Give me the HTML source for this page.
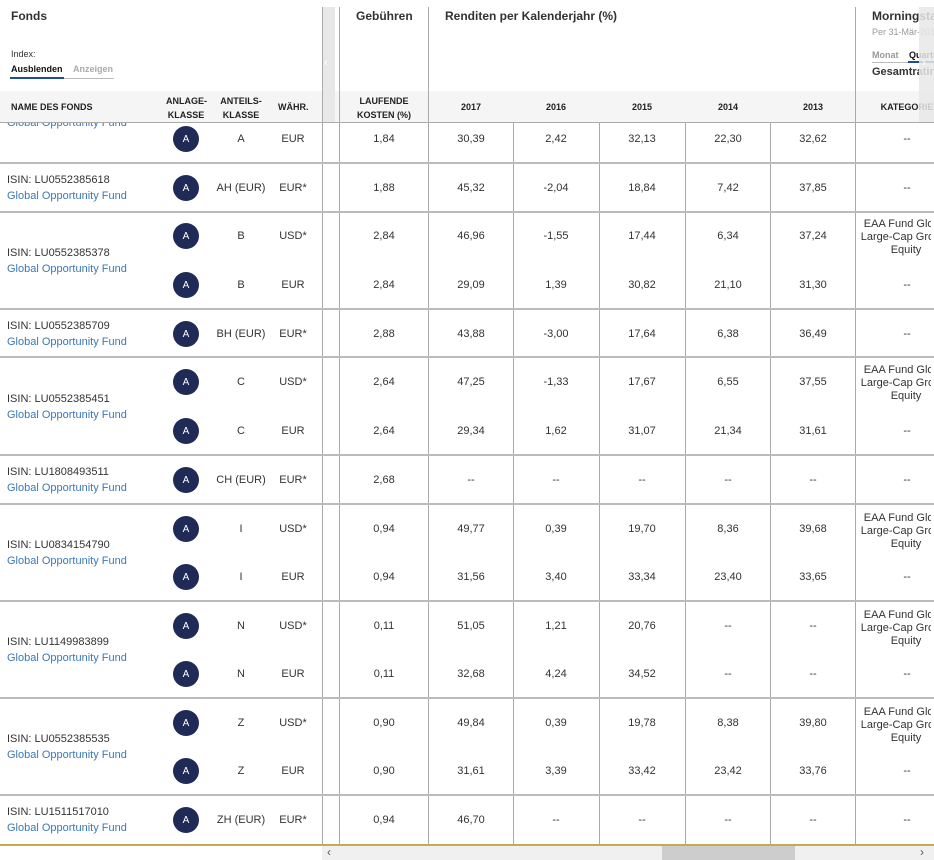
<!DOCTYPE html>
<html><head><meta charset="utf-8"><style>
*{margin:0;padding:0;box-sizing:border-box}
body{width:934px;height:860px;overflow:hidden;background:#fff;font-family:"Liberation Sans",sans-serif;color:#333;font-size:11px;position:relative}
.a{position:absolute}
.c{position:absolute;transform:translateX(-50%);white-space:nowrap;line-height:14px;top:-7px}
.r{position:absolute;left:0;width:934px;height:0}
.b{position:absolute;left:173px;top:-13px;width:26px;height:26px;border-radius:50%;background:#1f2a56;color:#fff;font-size:10px;text-align:center;line-height:12px;padding-top:8px}
.v{position:absolute;width:1px;background:#aaa}
.h{position:absolute;left:0;width:934px;height:2px;background:#bbb}
.hd{font-weight:bold;font-size:9px;color:#222;text-align:center;line-height:14px}
.nm{position:absolute;left:7px;line-height:16px;font-size:11px}
.lk{color:#3a78b8}
.k{position:absolute;left:-2px;width:104px;text-align:center;line-height:13px}
</style></head><body>
<div class="a" style="left:0;top:91px;width:934px;height:31px;background:#f5f5f5"></div>
<div class="a" style="left:11px;top:9px;font-weight:bold;font-size:12px;color:#333">Fonds</div>
<div class="a" style="left:11px;top:49px;font-size:9px;color:#333">Index:</div>
<div class="a" style="left:11px;top:64px;font-size:9px;font-weight:bold;color:#111">Ausblenden</div>
<div class="a" style="left:73px;top:64px;font-size:9px;font-weight:bold;color:#aaa">Anzeigen</div>
<div class="a" style="left:10px;top:77px;width:54px;height:2px;background:#1d4f8a"></div>
<div class="a" style="left:64px;top:78px;width:50px;height:1px;background:#bbb"></div>
<div class="a" style="left:356px;top:9px;font-weight:bold;font-size:12px;color:#333">Gebühren</div>
<div class="a" style="left:445px;top:9px;font-weight:bold;font-size:12px;color:#333">Renditen per Kalenderjahr (%)</div>
<div class="a" style="left:872px;top:9px;font-weight:bold;font-size:12px;color:#333;white-space:nowrap">Morningstar</div>
<div class="a" style="left:872px;top:27px;font-size:9px;color:#999;white-space:nowrap">Per 31-Mär-2018</div>
<div class="a" style="left:872px;top:50px;font-size:9px;font-weight:bold;color:#999">Monat</div>
<div class="a" style="left:909px;top:50px;font-size:9px;font-weight:bold;color:#111">Quartal</div>
<div class="a" style="left:872px;top:62px;width:62px;height:1px;background:#bbb"></div>
<div class="a" style="left:908px;top:61px;width:26px;height:2px;background:#1d4f8a"></div>
<div class="a" style="left:872px;top:66px;font-size:11px;font-weight:bold;color:#333;white-space:nowrap">Gesamtrating</div>

<div class="a hd" style="left:11px;top:100px">NAME DES FONDS</div>
<div class="a hd" style="left:166px;top:94px;width:40px">ANLAGE-<br>KLASSE</div>
<div class="a hd" style="left:216px;top:94px;width:50px">ANTEILS-<br>KLASSE</div>
<div class="a hd" style="left:278px;top:100px;width:30px">WÄHR.</div>
<div class="a hd" style="left:345px;top:94px;width:78px">LAUFENDE<br>KOSTEN (%)</div>
<div class="a hd" style="left:428px;top:100px;width:86px">2017</div>
<div class="a hd" style="left:513px;top:100px;width:86px">2016</div>
<div class="a hd" style="left:599px;top:100px;width:86px">2015</div>
<div class="a hd" style="left:685px;top:100px;width:86px">2014</div>
<div class="a hd" style="left:770px;top:100px;width:86px">2013</div>
<div class="a hd" style="left:860px;top:100px;width:94px">KATEGORIE</div>

<div class="v" style="left:322px;top:7px;height:838px"></div>
<div class="v" style="left:339px;top:7px;height:838px"></div>
<div class="v" style="left:428px;top:7px;height:115px"></div>
<div class="v" style="left:855px;top:7px;height:838px"></div>
<div class="v" style="left:428px;top:122px;height:723px"></div>
<div class="v" style="left:513px;top:122px;height:723px"></div>
<div class="v" style="left:599px;top:122px;height:723px"></div>
<div class="v" style="left:685px;top:122px;height:723px"></div>
<div class="v" style="left:770px;top:122px;height:723px"></div>

<div class="h" style="top:122px;height:1px;background:#aaa"></div>
<div class="h" style="top:162px"></div>
<div class="h" style="top:211px"></div>
<div class="h" style="top:308px"></div>
<div class="h" style="top:356px"></div>
<div class="h" style="top:454px"></div>
<div class="h" style="top:503px"></div>
<div class="h" style="top:600px"></div>
<div class="h" style="top:697px"></div>
<div class="h" style="top:794px"></div>
<div class="h" style="top:844px;background:#c8a850"></div>

<div class="a" style="left:0;top:123px;width:322px;height:39px;overflow:hidden"><div class="nm lk" style="top:-8px">Global Opportunity Fund</div></div>
<div class="nm" style="top:172px">ISIN: LU0552385618</div><div class="nm lk" style="top:188px">Global Opportunity Fund</div>
<div class="nm" style="top:245px">ISIN: LU0552385378</div><div class="nm lk" style="top:261px">Global Opportunity Fund</div>
<div class="nm" style="top:318px">ISIN: LU0552385709</div><div class="nm lk" style="top:334px">Global Opportunity Fund</div>
<div class="nm" style="top:391px">ISIN: LU0552385451</div><div class="nm lk" style="top:407px">Global Opportunity Fund</div>
<div class="nm" style="top:464px">ISIN: LU1808493511</div><div class="nm lk" style="top:480px">Global Opportunity Fund</div>
<div class="nm" style="top:537px">ISIN: LU0834154790</div><div class="nm lk" style="top:553px">Global Opportunity Fund</div>
<div class="nm" style="top:634px">ISIN: LU1149983899</div><div class="nm lk" style="top:650px">Global Opportunity Fund</div>
<div class="nm" style="top:731px">ISIN: LU0552385535</div><div class="nm lk" style="top:747px">Global Opportunity Fund</div>
<div class="nm" style="top:804px">ISIN: LU1511517010</div><div class="nm lk" style="top:820px">Global Opportunity Fund</div>

<div class="r" style="top:139px"><div class="b">A</div><div class="c" style="left:241px">A</div><div class="c" style="left:293px">EUR</div><div class="c" style="left:384px">1,84</div><div class="c" style="left:471px">30,39</div><div class="c" style="left:556px">2,42</div><div class="c" style="left:642px">32,13</div><div class="c" style="left:728px">22,30</div><div class="c" style="left:813px">32,62</div><div class="c" style="left:907px">--</div></div>
<div class="r" style="top:188px"><div class="b">A</div><div class="c" style="left:241px">AH (EUR)</div><div class="c" style="left:293px">EUR*</div><div class="c" style="left:384px">1,88</div><div class="c" style="left:471px">45,32</div><div class="c" style="left:556px">-2,04</div><div class="c" style="left:642px">18,84</div><div class="c" style="left:728px">7,42</div><div class="c" style="left:813px">37,85</div><div class="c" style="left:907px">--</div></div>
<div class="r" style="top:236px"><div class="b">A</div><div class="c" style="left:241px">B</div><div class="c" style="left:293px">USD*</div><div class="c" style="left:384px">2,84</div><div class="c" style="left:471px">46,96</div><div class="c" style="left:556px">-1,55</div><div class="c" style="left:642px">17,44</div><div class="c" style="left:728px">6,34</div><div class="c" style="left:813px">37,24</div></div>
<div class="r" style="top:285px"><div class="b">A</div><div class="c" style="left:241px">B</div><div class="c" style="left:293px">EUR</div><div class="c" style="left:384px">2,84</div><div class="c" style="left:471px">29,09</div><div class="c" style="left:556px">1,39</div><div class="c" style="left:642px">30,82</div><div class="c" style="left:728px">21,10</div><div class="c" style="left:813px">31,30</div><div class="c" style="left:907px">--</div></div>
<div class="r" style="top:334px"><div class="b">A</div><div class="c" style="left:241px">BH (EUR)</div><div class="c" style="left:293px">EUR*</div><div class="c" style="left:384px">2,88</div><div class="c" style="left:471px">43,88</div><div class="c" style="left:556px">-3,00</div><div class="c" style="left:642px">17,64</div><div class="c" style="left:728px">6,38</div><div class="c" style="left:813px">36,49</div><div class="c" style="left:907px">--</div></div>
<div class="r" style="top:382px"><div class="b">A</div><div class="c" style="left:241px">C</div><div class="c" style="left:293px">USD*</div><div class="c" style="left:384px">2,64</div><div class="c" style="left:471px">47,25</div><div class="c" style="left:556px">-1,33</div><div class="c" style="left:642px">17,67</div><div class="c" style="left:728px">6,55</div><div class="c" style="left:813px">37,55</div></div>
<div class="r" style="top:431px"><div class="b">A</div><div class="c" style="left:241px">C</div><div class="c" style="left:293px">EUR</div><div class="c" style="left:384px">2,64</div><div class="c" style="left:471px">29,34</div><div class="c" style="left:556px">1,62</div><div class="c" style="left:642px">31,07</div><div class="c" style="left:728px">21,34</div><div class="c" style="left:813px">31,61</div><div class="c" style="left:907px">--</div></div>
<div class="r" style="top:480px"><div class="b">A</div><div class="c" style="left:241px">CH (EUR)</div><div class="c" style="left:293px">EUR*</div><div class="c" style="left:384px">2,68</div><div class="c" style="left:471px">--</div><div class="c" style="left:556px">--</div><div class="c" style="left:642px">--</div><div class="c" style="left:728px">--</div><div class="c" style="left:813px">--</div><div class="c" style="left:907px">--</div></div>
<div class="r" style="top:529px"><div class="b">A</div><div class="c" style="left:241px">I</div><div class="c" style="left:293px">USD*</div><div class="c" style="left:384px">0,94</div><div class="c" style="left:471px">49,77</div><div class="c" style="left:556px">0,39</div><div class="c" style="left:642px">19,70</div><div class="c" style="left:728px">8,36</div><div class="c" style="left:813px">39,68</div></div>
<div class="r" style="top:577px"><div class="b">A</div><div class="c" style="left:241px">I</div><div class="c" style="left:293px">EUR</div><div class="c" style="left:384px">0,94</div><div class="c" style="left:471px">31,56</div><div class="c" style="left:556px">3,40</div><div class="c" style="left:642px">33,34</div><div class="c" style="left:728px">23,40</div><div class="c" style="left:813px">33,65</div><div class="c" style="left:907px">--</div></div>
<div class="r" style="top:626px"><div class="b">A</div><div class="c" style="left:241px">N</div><div class="c" style="left:293px">USD*</div><div class="c" style="left:384px">0,11</div><div class="c" style="left:471px">51,05</div><div class="c" style="left:556px">1,21</div><div class="c" style="left:642px">20,76</div><div class="c" style="left:728px">--</div><div class="c" style="left:813px">--</div></div>
<div class="r" style="top:674px"><div class="b">A</div><div class="c" style="left:241px">N</div><div class="c" style="left:293px">EUR</div><div class="c" style="left:384px">0,11</div><div class="c" style="left:471px">32,68</div><div class="c" style="left:556px">4,24</div><div class="c" style="left:642px">34,52</div><div class="c" style="left:728px">--</div><div class="c" style="left:813px">--</div><div class="c" style="left:907px">--</div></div>
<div class="r" style="top:723px"><div class="b">A</div><div class="c" style="left:241px">Z</div><div class="c" style="left:293px">USD*</div><div class="c" style="left:384px">0,90</div><div class="c" style="left:471px">49,84</div><div class="c" style="left:556px">0,39</div><div class="c" style="left:642px">19,78</div><div class="c" style="left:728px">8,38</div><div class="c" style="left:813px">39,80</div></div>
<div class="r" style="top:771px"><div class="b">A</div><div class="c" style="left:241px">Z</div><div class="c" style="left:293px">EUR</div><div class="c" style="left:384px">0,90</div><div class="c" style="left:471px">31,61</div><div class="c" style="left:556px">3,39</div><div class="c" style="left:642px">33,42</div><div class="c" style="left:728px">23,42</div><div class="c" style="left:813px">33,76</div><div class="c" style="left:907px">--</div></div>
<div class="r" style="top:820px"><div class="b">A</div><div class="c" style="left:241px">ZH (EUR)</div><div class="c" style="left:293px">EUR*</div><div class="c" style="left:384px">0,94</div><div class="c" style="left:471px">46,70</div><div class="c" style="left:556px">--</div><div class="c" style="left:642px">--</div><div class="c" style="left:728px">--</div><div class="c" style="left:813px">--</div><div class="c" style="left:907px">--</div></div>

<div class="a" style="left:856px;top:0;width:75px;height:845px;overflow:hidden">
<div class="k" style="top:218px">EAA Fund Global<br>Large-Cap Growth<br>Equity</div>
<div class="k" style="top:364px">EAA Fund Global<br>Large-Cap Growth<br>Equity</div>
<div class="k" style="top:512px">EAA Fund Global<br>Large-Cap Growth<br>Equity</div>
<div class="k" style="top:609px">EAA Fund Global<br>Large-Cap Growth<br>Equity</div>
<div class="k" style="top:706px">EAA Fund Global<br>Large-Cap Growth<br>Equity</div>
</div>

<div class="a" style="left:323px;top:7px;width:12px;height:115px;background:#e8e8e8"></div>
<div class="a" style="left:324px;top:55px;color:#fff;font-size:12px">‹</div>
<div class="a" style="left:919px;top:7px;width:15px;height:115px;background:rgba(232,232,232,0.85)"></div>
<div class="a" style="left:922px;top:55px;color:#fff;font-size:12px">›</div>

<div class="a" style="left:322px;top:846px;width:612px;height:14px;background:#f0f0f0"></div>
<div class="a" style="left:662px;top:846px;width:133px;height:14px;background:#cdcdcd"></div>
<div class="a" style="left:327px;top:845px;color:#555;font-size:12px;line-height:14px">‹</div>
<div class="a" style="left:920px;top:845px;color:#555;font-size:12px;line-height:14px">›</div>
</body></html>
